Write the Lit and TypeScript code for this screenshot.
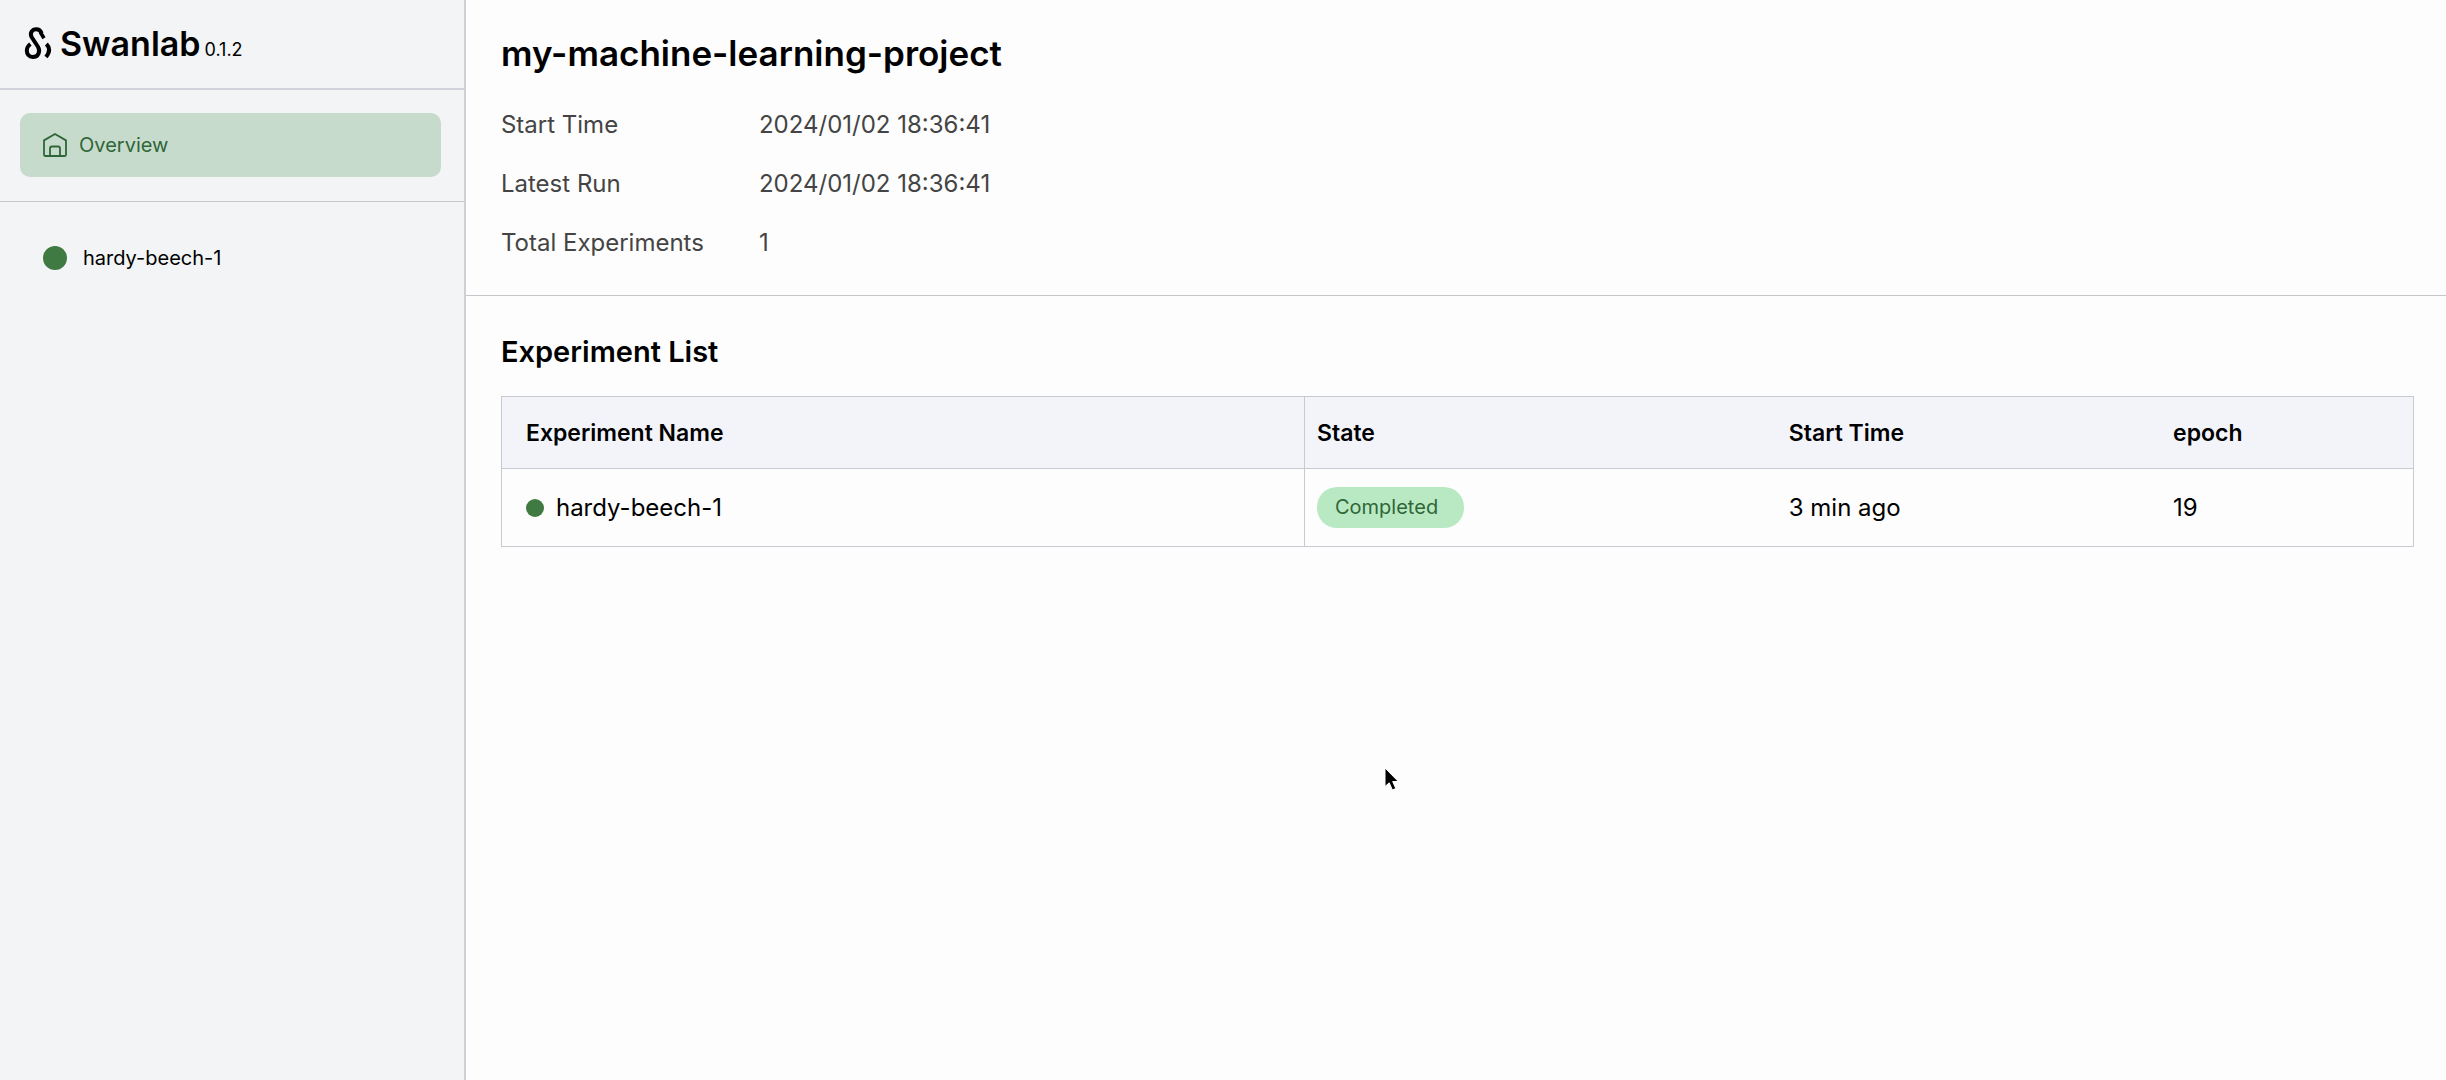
import { LitElement, html, css } from "lit";
import { customElement } from "lit/decorators.js";

interface Experiment {
  name: string;
  state: string;
  started: string;
  epoch: number;
}

const project = {
  name: "my-machine-learning-project",
  facts: [
    ["Start Time", "2024/01/02 18:36:41"],
    ["Latest Run", "2024/01/02 18:36:41"],
    ["Total Experiments", "1"],
  ],
};

const experiments: Experiment[] = [
  { name: "hardy-beech-1", state: "Completed", started: "3 min ago", epoch: 19 },
];

@customElement("side-bar")
class SideBar extends LitElement {
  static styles = css`
    :host {
      display: flex;
      flex-direction: column;
      box-sizing: border-box;
      background: #f2f4f5;
      border-right: 2px solid #cfcfd5;
    }
    .brand {
      display: flex;
      align-items: center;
      gap: 8px;
      height: 90px;
      box-sizing: border-box;
      padding: 0 24px;
      border-bottom: 2px solid #d2d2da;
      color: #000;
    }
    .logo {
      width: 28px;
      height: 34px;
      flex: none;
    }
    .name {
      display: flex;
      align-items: baseline;
      gap: 4px;
    }
    .word {
      font-size: 34px;
      font-weight: 600;
      line-height: 44px;
    }
    .version {
      font-size: 18px;
    }
    .menu {
      padding: 23px 23px 24px 20px;
      border-bottom: 1px solid #c8c8cc;
    }
    .runs {
      padding: 24px 23px 24px 20px;
    }
    .item {
      display: flex;
      align-items: center;
      height: 64px;
      padding: 0 23px;
      border-radius: 10px;
      font-size: 20px;
      color: #000;
      text-decoration: none;
    }
    .home {
      gap: 12px;
      background: #c7dbcd;
      color: #2f6638;
    }
    .run {
      gap: 16px;
    }
    .icon {
      width: 24px;
      height: 24px;
    }
    .dot {
      width: 24px;
      height: 24px;
      border-radius: 50%;
      background: #3f7a42;
    }
  `;

  render() {
    return html`
      <header class="brand">
        <svg class="logo" viewBox="0 0 28 34" fill="none" stroke="currentColor" stroke-width="4" aria-hidden="true">
          <path d="M17.600 6.200C16.600 3.600 14.800 2.200 12.400 2.200 8 2.200 5.600 6 7.600 10L13.800 19.500C16.800 24.400 14.400 30 8.800 30 4.800 30 2.800 27 2.800 23.600 2.800 20.600 4.200 18.600 6.400 17" />
          <path d="M16.400 5.200L20 11.200" stroke-width="3.600" />
          <path d="M22.400 17C26 20.600 26 25 22 30" />
        </svg>
        <span class="name"><span class="word">Swanlab</span><span class="version">0.1.2</span></span>
      </header>
      <nav class="menu" aria-label="Project">
        <a class="item home" href="#overview" aria-current="page">
          <svg class="icon" viewBox="0 0 24 24" fill="none" stroke="currentColor" stroke-width="1.800" stroke-linejoin="round" aria-hidden="true">
            <path d="M1 21.800V7.400L12 1l11 6.400v14.400a1.200 1.200 0 0 1-1.200 1.200H2.200A1.200 1.200 0 0 1 1 21.800Z" />
            <path d="M7 23v-7.500a2 2 0 0 1 2-2h6a2 2 0 0 1 2 2V23" />
          </svg>
          <span>Overview</span>
        </a>
      </nav>
      <nav class="runs" aria-label="Experiments">
        ${experiments.map(
          (e) => html`<a class="item run" href="#${e.name}"><span class="dot"></span><span>${e.name}</span></a>`
        )}
      </nav>
    `;
  }
}

@customElement("project-summary")
class ProjectSummary extends LitElement {
  static styles = css`
    :host {
      display: block;
      padding: 31px 35px 23px;
      border-bottom: 1px solid #c6c6ca;
    }
    .title {
      margin: 0 0 20px;
      font-size: 35px;
      font-weight: 600;
      line-height: 44px;
      color: #000;
    }
    .facts {
      display: grid;
      grid-template-columns: 258px 1fr;
      margin: 0;
      font-size: 24px;
      line-height: 59px;
      color: #444;
    }
    .value {
      margin: 0;
    }
  `;

  render() {
    return html`
      <h1 class="title">${project.name}</h1>
      <dl class="facts">
        ${project.facts.map(([k, v]) => html`<dt>${k}</dt><dd class="value">${v}</dd>`)}
      </dl>
    `;
  }
}

@customElement("experiment-list")
class ExperimentList extends LitElement {
  static styles = css`
    :host {
      display: block;
      padding: 36px 32px 36px 35px;
    }
    .heading {
      margin: 0 0 24px;
      font-size: 29px;
      font-weight: 600;
      line-height: 40px;
      color: #000;
    }
    .table {
      width: 100%;
      table-layout: fixed;
      border-collapse: collapse;
      border: 1px solid #c9c9d2;
      font-size: 24px;
      color: #000;
    }
    .c-name {
      width: 42%;
    }
    .c-state {
      width: 24.7%;
    }
    .c-start {
      width: 20.1%;
    }
    .head {
      height: 72px;
      background: #f3f4fa;
    }
    .row {
      height: 78px;
      border-top: 1px solid #c9c9d2;
    }
    .cell {
      padding: 0 12px;
      text-align: left;
    }
    .th {
      font-size: 23px;
      font-weight: 600;
    }
    .first {
      padding-left: 24px;
      border-right: 1px solid #c9c9d2;
    }
    .label {
      display: flex;
      align-items: center;
      gap: 12px;
      color: inherit;
      text-decoration: none;
    }
    .dot {
      width: 18px;
      height: 18px;
      border-radius: 50%;
      background: #3f7a42;
    }
    .state {
      display: inline-block;
      padding: 0 26px 0 18px;
      border-radius: 20px;
      background: #b9e9c3;
      color: #2f6638;
      font-size: 20px;
      line-height: 41px;
      vertical-align: middle;
    }
  `;

  render() {
    return html`
      <h2 class="heading">Experiment List</h2>
      <table class="table">
        <colgroup>
          <col class="c-name" />
          <col class="c-state" />
          <col class="c-start" />
          <col />
        </colgroup>
        <thead>
          <tr class="head">
            <th class="cell th first" scope="col">Experiment Name</th>
            <th class="cell th" scope="col">State</th>
            <th class="cell th" scope="col">Start Time</th>
            <th class="cell th" scope="col">epoch</th>
          </tr>
        </thead>
        <tbody>
          ${experiments.map(
            (e) => html`<tr class="row">
              <td class="cell first"><a class="label" href="#${e.name}"><span class="dot"></span><span>${e.name}</span></a></td>
              <td class="cell"><span class="state">${e.state}</span></td>
              <td class="cell">${e.started}</td>
              <td class="cell">${e.epoch}</td>
            </tr>`
          )}
        </tbody>
      </table>
    `;
  }
}

@customElement("app-root")
class AppRoot extends LitElement {
  static styles = css`
    :host {
      display: grid;
      grid-template-columns: minmax(240px, 19.05%) 1fr;
      position: relative;
      min-height: 100vh;
      background: #fdfdfd;
      font-family: Inter, "Liberation Sans", sans-serif;
    }
    .pointer {
      position: absolute;
      left: 1383px;
      top: 766px;
      width: 18px;
      height: 27px;
    }
  `;

  render() {
    return html`
      <side-bar></side-bar>
      <main>
        <project-summary></project-summary>
        <experiment-list></experiment-list>
      </main>
      <svg class="pointer" viewBox="0 0 18 27" aria-hidden="true">
        <path d="M2 2v18.500l4.200-3.700 3.200 7.200 3.400-1.500-3.100-7h5.600Z" fill="#000" stroke="#fff" stroke-width="1" />
      </svg>
    `;
  }
}
